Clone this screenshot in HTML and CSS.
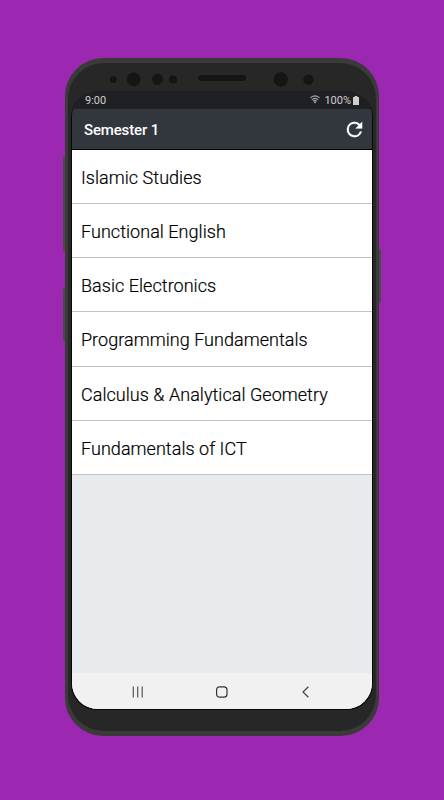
FILE: index.html
```html
<!DOCTYPE html>
<html lang="en">
<head>
<meta charset="utf-8">
<title>Semester 1</title>
<link rel="stylesheet" href="styles.css">
</head>
<body>
<div class="phone">
  <i class="key key-volume"></i><i class="key key-assist"></i><i class="key key-power"></i>
  <div class="body">
    <svg class="sensors" width="308" height="28" viewBox="68 63 308 28" fill="#151515">
      <circle cx="113.3" cy="79.5" r="3.5"/><circle cx="133.6" cy="79.3" r="6.9"/>
      <circle cx="157.5" cy="79.3" r="5.5"/><circle cx="173" cy="79.5" r="4.1"/>
      <rect x="198" y="75" width="48" height="6" rx="3"/>
      <circle cx="280.8" cy="79.5" r="7.2"/><circle cx="308.4" cy="79.6" r="5.2"/>
    </svg>
    <div class="screen">
      <div class="status">
        <span class="time">9:00</span>
        <svg class="wifi" width="10" height="9" viewBox="0 0 10 9" fill="none" stroke="#c8c8c8" stroke-width="1">
          <path d="M.4 2.7Q5-.9 9.6 2.7M1.8 4.5Q5 2 8.2 4.5M3.2 6.1Q5 4.7 6.8 6.1"/>
          <path d="M3.9 7 5 8.4 6.1 7Q5 6.2 3.9 7Z" fill="#c8c8c8" stroke="none"/>
        </svg>
        <span class="percent">100%</span>
        <svg class="battery" width="6" height="9" viewBox="0 0 6 9" fill="#cfcfcf"><path d="M1.7 0h2.6v1H5.5q.5 0 .5.5v7q0 .5-.5.5h-5Q0 9 0 8.500v-7Q0 1 .5 1h1.200Z"/></svg>
      </div>
      <header class="bar">
        <h1>Semester 1</h1>
        <svg width="23" height="23" viewBox="0 0 24 24" fill="#fff" stroke="#fff" stroke-width=".2"><path d="M17.650 6.350A7.958 7.958 0 0 0 12 4a8 8 0 1 0 7.730 10h-2.080A6 6 0 1 1 12 6c1.660 0 3.140.69 4.220 1.780L13 11h7V4z"/></svg>
      </header>
      <ul class="list">
        <li>Islamic Studies</li>
        <li>Functional English</li>
        <li>Basic Electronics</li>
        <li>Programming Fundamentals</li>
        <li>Calculus &amp; Analytical Geometry</li>
        <li>Fundamentals of ICT</li>
      </ul>
      <nav class="nav">
        <svg width="12" height="12" viewBox="0 0 12 12" stroke="#555" stroke-width="1.200"><path d="M1.300.5v11M5.700.5v11M10.200.5v11"/></svg>
        <svg width="12" height="12" viewBox="0 0 12 12" fill="none" stroke="#333" stroke-width="1.200"><rect x=".6" y=".8" width="10.400" height="10.400" rx="3"/></svg>
        <svg width="12" height="12" viewBox="0 0 12 12" fill="none" stroke="#444" stroke-width="1.200"><path d="M8.400.7 3 6l5.400 5.300"/></svg>
      </nav>
    </div>
  </div>
</div>
</body>
</html>
```
FILE: styles.css
```css
* { box-sizing: border-box; }
body {
  margin: 0;
  height: 800px;
  padding: 58px 0 0 65px;
  background: #9c27b0;
  font-family: Roboto, sans-serif;
  overflow: hidden;
}
.phone {
  position: relative;
  width: 314px;
  height: 678px;
  padding: 5px 3px;
  border-radius: 38px;
  background: #3a3a39;
}
.key { position: absolute; width: 2px; background: #4a4b46; }
.key-volume { left: -2px; top: 98px; height: 96px; border-radius: 2px 0 0 2px; }
.key-assist { left: -2px; top: 230px; height: 54px; border-radius: 2px 0 0 2px; }
.key-power { right: -2px; top: 191px; height: 54px; border-radius: 0 2px 2px 0; }
.body {
  height: 668px;
  padding: 0 4px;
  border-radius: 36px;
  background: #272727;
}
.sensors { display: block; margin-left: -4px; }
.screen {
  display: flex;
  flex-direction: column;
  width: 300px;
  height: 618px;
  border-radius: 26px;
  overflow: hidden;
  background: linear-gradient(#1f2024 40px, #f1f1f1 40px);
  box-shadow: -1px 1px #080808, 1px 1px #080808;
}
.status {
  display: flex;
  flex: none;
  align-items: center;
  height: 18px;
  padding: 1px 13px 0 13px;
  background: #1f2024;
  color: #cfcfcf;
  font-size: 11px;
}
.wifi { margin: -3px 4px 0 auto; }
.battery { margin: 0 0 1px 2px; }
.bar {
  display: flex;
  flex: none;
  align-items: center;
  justify-content: space-between;
  height: 41px;
  padding: 0 6px 0 12px;
  border-bottom: 1px solid #000;
  background: #32363d;
}
h1 { margin: 2px 0 0; color: #fff; font-size: 15px; font-weight: 500; letter-spacing: -.15px; line-height: 20px; }
.list { flex: 1; margin: 0; padding: 0; list-style: none; background: #e7ebee; }
.list li {
  height: 54.16px;
  padding-left: 9px;
  border-bottom: 1px solid #c2c2c2;
  background: #fff;
  color: #000;
  font-size: 18px;
  font-weight: 300;
  letter-spacing: .04px;
  line-height: 55px;
  white-space: nowrap;
  -webkit-text-stroke: .2px #000;
}
.nav {
  display: flex;
  flex: none;
  align-items: center;
  gap: 72px;
  height: 36px;
  padding: 1px 0 0 60px;
  background: #f1f1f1;
}
```
